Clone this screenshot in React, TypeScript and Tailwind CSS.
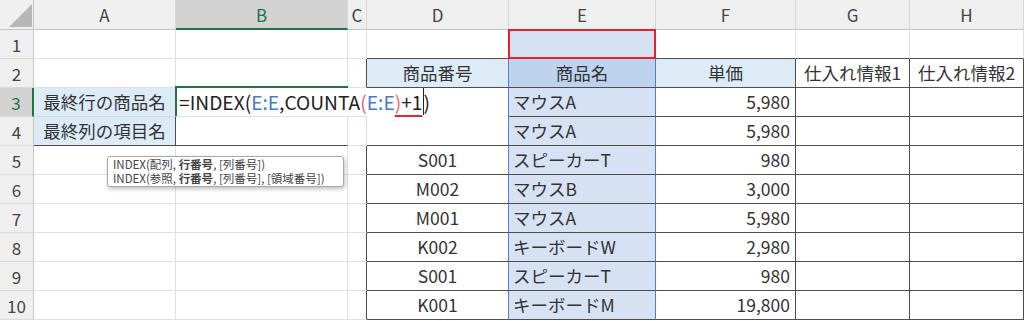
import React from "react";

const GRID = "border-r border-b border-[#e1e1e1]";

function Row({ n, sel }: { n: number; sel?: boolean }) {
  return (
    <div
      className={
        "flex items-center justify-center border-b border-b-[#d9d9d9] text-[17px] " +
        (sel
          ? "bg-[#d2d2d2] text-[#217346] border-r-2 border-r-[#217346]"
          : "bg-[#efefef] text-[#444] border-r border-r-[#c4c4c4]")
      }
    >
      {n}
    </div>
  );
}

const DARK_RB = "border-r border-b border-[#4d4d4d]";
const HL = "bg-[#d6e1f3]";
const BLUE_R = "border-r border-r-[#4f7fd3] border-b border-b-[#4d4d4d]";

type DataRow = { n: number; d: string; e: string; f: string };

const data: DataRow[] = [
  { n: 5, d: "S001", e: "スピーカーT", f: "980" },
  { n: 6, d: "M002", e: "マウスB", f: "3,000" },
  { n: 7, d: "M001", e: "マウスA", f: "5,980" },
  { n: 8, d: "K002", e: "キーボードW", f: "2,980" },
  { n: 9, d: "S001", e: "スピーカーT", f: "980" },
  { n: 10, d: "K001", e: "キーボードM", f: "19,800" },
];

export default function App() {
  const letters = ["A", "B", "C", "D", "E", "F", "G", "H"];
  return (
    <div className="w-[1024px] h-[321px] overflow-hidden bg-white font-['Noto_Sans_CJK_JP','Noto_Sans',sans-serif] text-[#333]">
      <div className="relative grid grid-cols-[34px_142px_172px_19px_142px_147px_140px_114px_114px] grid-rows-[30px_repeat(10,29px)] text-[17.5px] leading-none">
        {/* header row */}
        <div className="relative bg-[#efefef] border-r border-b border-[#c4c4c4]">
          <svg className="absolute left-0 top-0" width="34" height="30" viewBox="0 0 34 30">
            <polygon points="9,27 32,27 32,4" fill="#b7b7b7" />
          </svg>
        </div>
        {letters.map((l) => (
          <div
            key={l}
            className={
              "flex items-center justify-center text-[17px] border-r border-r-[#d6d6d6] " +
              (l === "B"
                ? "bg-[#d2d2d2] text-[#217346] border-b-2 border-b-[#217346]"
                : "bg-[#efefef] text-[#444] border-b border-b-[#c4c4c4]")
            }
          >
            {l}
          </div>
        ))}

        {/* row 1 */}
        <Row n={1} />
        <div className={GRID} />
        <div className={GRID} />
        <div className={GRID} />
        <div className="border-r border-r-[#e1e1e1] border-b border-b-[#4d4d4d]" />
        <div className={"relative " + HL}>
          <div className="absolute -left-px -top-px right-0 bottom-0 border-2 border-[#e8202a]" />
        </div>
        <div className="border-r border-r-[#e1e1e1] border-b border-b-[#4d4d4d]" />
        <div className="border-r border-r-[#e1e1e1] border-b border-b-[#4d4d4d]" />
        <div className="border-r border-r-[#e1e1e1] border-b border-b-[#4d4d4d]" />

        {/* row 2 */}
        <Row n={2} />
        <div className={GRID} />
        <div className={GRID} />
        <div className="border-r border-r-[#4d4d4d] border-b border-b-[#e1e1e1]" />
        <div className={"flex items-center justify-center bg-[#ddebf7] " + BLUE_R}>商品番号</div>
        <div className={"flex items-center justify-center bg-[#bdd2ec] " + BLUE_R}>商品名</div>
        <div className={"flex items-center justify-center bg-[#ddebf7] " + DARK_RB}>単価</div>
        <div className={"flex items-center justify-center " + DARK_RB}>仕入れ情報1</div>
        <div className={"flex items-center justify-center " + DARK_RB}>仕入れ情報2</div>

        {/* row 3 */}
        <Row n={3} sel />
        <div className="flex items-center justify-center bg-[#ddebf7] border-r border-r-[#4d4d4d] border-b border-b-[#cfd8e2]">
          最終行の商品名
        </div>
        <div className="relative z-10 flex items-stretch border-b border-b-[#e1e1e1]">
          <div className="absolute -left-px -top-[2px] w-[173px] h-[30px] border-t-2 border-l-2 border-[#217346] pointer-events-none" />
          <span className="whitespace-nowrap bg-white h-[28px] leading-[28px] pl-[3px] pr-[4px] text-[19.2px] text-[#222]">
            =INDEX(<span className="text-[#4a78c8]">E:E</span>,COUNTA
            <span className="text-[#e2686a]">(</span>
            <span className="text-[#4a78c8]">E:E</span>
            <span className="underline decoration-[#e0282e] decoration-2 underline-offset-[5px]">
              <span className="text-[#e2686a]">)</span>+1
            </span>
            <span className="inline-block w-px h-[27px] align-top bg-[#222]" />)
          </span>
        </div>
        <div className="border-b border-b-[#e1e1e1]" />
        <div className="border-r border-r-[#4f7fd3]" />
        <div className={"flex items-center pl-[4px] " + HL + " " + BLUE_R}>マウスA</div>
        <div className={"flex items-center justify-end pr-[5px] " + DARK_RB}>5,980</div>
        <div className={DARK_RB} />
        <div className={DARK_RB} />

        {/* row 4 */}
        <Row n={4} />
        <div className="flex items-center justify-center bg-[#ddebf7] border-r border-b border-[#4d4d4d]">
          最終列の項目名
        </div>
        <div className="border-r border-r-[#e1e1e1] border-b border-b-[#4d4d4d]" />
        <div className={GRID} />
        <div className={BLUE_R} />
        <div className={"flex items-center pl-[4px] " + HL + " " + BLUE_R}>マウスA</div>
        <div className={"flex items-center justify-end pr-[5px] " + DARK_RB}>5,980</div>
        <div className={DARK_RB} />
        <div className={DARK_RB} />

        {/* rows 5-10 */}
        {data.map((r) => (
          <React.Fragment key={r.n}>
            <Row n={r.n} />
            <div className={GRID} />
            <div className={GRID} />
            <div className="border-r border-r-[#4d4d4d] border-b border-b-[#e1e1e1]" />
            <div className={"flex items-center justify-center " + BLUE_R}>{r.d}</div>
            <div className={"flex items-center pl-[4px] " + HL + " " + BLUE_R}>{r.e}</div>
            <div className={"flex items-center justify-end pr-[5px] " + DARK_RB}>{r.f}</div>
            <div className={DARK_RB} />
            <div className={DARK_RB} />
          </React.Fragment>
        ))}

        {/* tooltip */}
        <div className="absolute left-[107px] top-[156px] z-20 w-[237px] h-[31px] rounded-[3px] border border-[#a8a8a8] bg-white shadow-[1px_2px_4px_rgba(0,0,0,0.25)] px-[5px] text-[11.5px] leading-[14px] text-[#444] whitespace-nowrap">
          <div className="h-[14px] overflow-hidden">
            INDEX(配列, <b className="font-bold">行番号</b>, [列番号])
          </div>
          <div className="h-[14px] overflow-hidden">
            INDEX(参照, <b className="font-bold">行番号</b>, [列番号], [領域番号])
          </div>
        </div>
      </div>
    </div>
  );
}
